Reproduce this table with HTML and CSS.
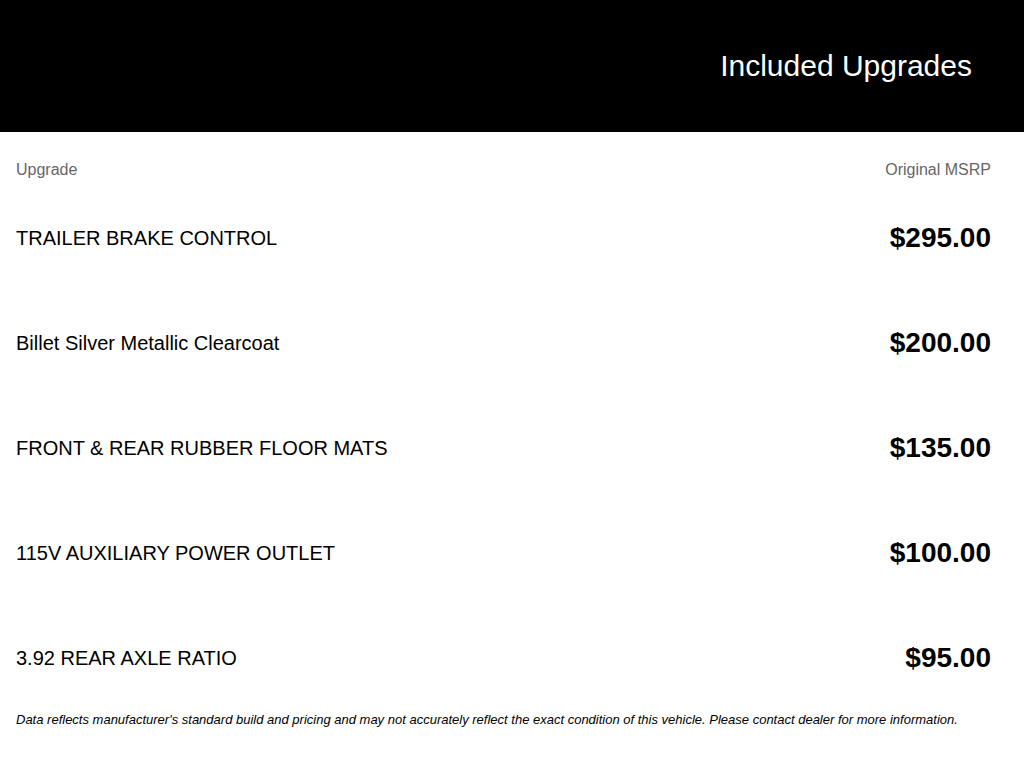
FILE: index.html
```html
<!DOCTYPE html>
<html>
<head>
<meta charset="utf-8">
<link rel="stylesheet" href="styles.css">
</head>
<body>
<header class="banner">
  <h1 class="banner-title">Included Upgrades</h1>
</header>
<main class="upgrades">
  <div class="col-head">
    <span>Upgrade</span>
    <span>Original MSRP</span>
  </div>
  <div class="row"><span class="name">TRAILER BRAKE CONTROL</span><span class="price">$295.00</span></div>
  <div class="row"><span class="name">Billet Silver Metallic Clearcoat</span><span class="price">$200.00</span></div>
  <div class="row"><span class="name">FRONT &amp; REAR RUBBER FLOOR MATS</span><span class="price">$135.00</span></div>
  <div class="row"><span class="name">115V AUXILIARY POWER OUTLET</span><span class="price">$100.00</span></div>
  <div class="row"><span class="name">3.92 REAR AXLE RATIO</span><span class="price">$95.00</span></div>
  <p class="note">Data reflects manufacturer's standard build and pricing and may not accurately reflect the exact condition of this vehicle. Please contact dealer for more information.</p>
</main>
</body>
</html>
```

FILE: styles.css
```css
html, body {
  margin: 0;
  padding: 0;
  background: #fff;
  font-family: "Liberation Sans", Arial, sans-serif;
  color: #000;
}

.banner {
  background: #000;
  height: 132px;
  display: flex;
  align-items: center;
  justify-content: flex-end;
  padding-right: 52px;
}

.banner-title {
  margin: 0;
  color: #fff;
  font-weight: normal;
  font-size: 30px;
  line-height: 34px;
}

.upgrades {
  padding: 0 33px 0 16px;
}

.col-head {
  display: flex;
  justify-content: space-between;
  padding-top: 28px;
  padding-bottom: 6px;
  font-size: 16px;
  line-height: 20px;
  color: #666;
}

.row {
  height: 105px;
  display: flex;
  align-items: center;
  justify-content: space-between;
}

.name {
  font-size: 20px;
}

.price {
  font-size: 28px;
  line-height: 30px;
  font-weight: bold;
  padding-bottom: 1px;
}

.note {
  margin: 0;
  font-size: 13px;
  line-height: 18px;
  font-style: italic;
}
```
